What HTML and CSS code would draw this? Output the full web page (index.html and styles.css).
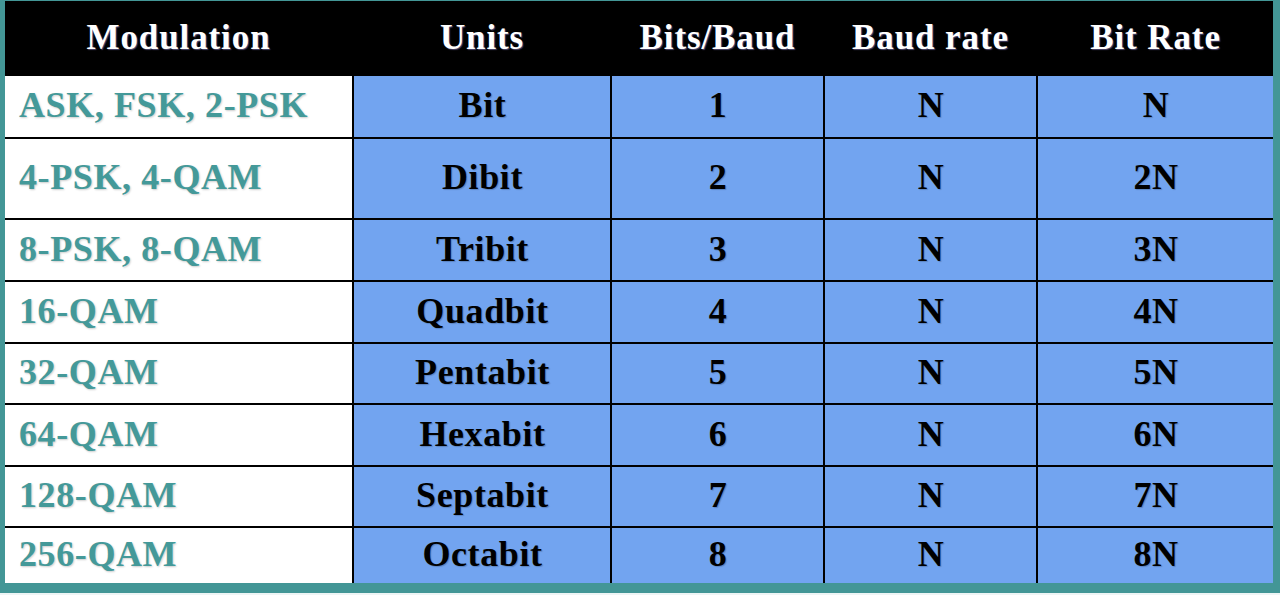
FILE: index.html
```html
<!DOCTYPE html>
<html>
<head>
<meta charset="utf-8">
<link rel="stylesheet" href="styles.css">
</head>
<body>
<div class="frame">
  <div class="grid">
    <div class="cell head">Modulation</div>
    <div class="cell head">Units</div>
    <div class="cell head">Bits/Baud</div>
    <div class="cell head">Baud rate</div>
    <div class="cell head">Bit Rate</div>

    <div class="cell mod">ASK, FSK, 2-PSK</div>
    <div class="cell val">Bit</div>
    <div class="cell val">1</div>
    <div class="cell val">N</div>
    <div class="cell val">N</div>

    <div class="cell mod">4-PSK, 4-QAM</div>
    <div class="cell val">Dibit</div>
    <div class="cell val">2</div>
    <div class="cell val">N</div>
    <div class="cell val">2N</div>

    <div class="cell mod">8-PSK, 8-QAM</div>
    <div class="cell val">Tribit</div>
    <div class="cell val">3</div>
    <div class="cell val">N</div>
    <div class="cell val">3N</div>

    <div class="cell mod">16-QAM</div>
    <div class="cell val">Quadbit</div>
    <div class="cell val">4</div>
    <div class="cell val">N</div>
    <div class="cell val">4N</div>

    <div class="cell mod">32-QAM</div>
    <div class="cell val">Pentabit</div>
    <div class="cell val">5</div>
    <div class="cell val">N</div>
    <div class="cell val">5N</div>

    <div class="cell mod">64-QAM</div>
    <div class="cell val">Hexabit</div>
    <div class="cell val">6</div>
    <div class="cell val">N</div>
    <div class="cell val">6N</div>

    <div class="cell mod">128-QAM</div>
    <div class="cell val">Septabit</div>
    <div class="cell val">7</div>
    <div class="cell val">N</div>
    <div class="cell val">7N</div>

    <div class="cell mod">256-QAM</div>
    <div class="cell val">Octabit</div>
    <div class="cell val">8</div>
    <div class="cell val">N</div>
    <div class="cell val">8N</div>
  </div>
</div>
</body>
</html>
```

FILE: styles.css
```css
html, body {
  margin: 0;
  padding: 0;
  background: #eef5f5;
}
.frame {
  width: 1280px;
  height: 593px;
  box-sizing: border-box;
  background: #439696;
  padding: 1px 7px 10px 5px;
}
.grid {
  display: grid;
  grid-template-columns: 347px 256px 211px 211px 235px;
  grid-template-rows: 73px 61px 79px 60px 60px 59px 60px 59px 55px;
  gap: 2px;
  background: #000;
  font-family: "Liberation Serif", "Times New Roman", serif;
  font-weight: bold;
}
.cell {
  display: flex;
  align-items: center;
  justify-content: center;
  box-sizing: border-box;
  white-space: nowrap;
}
.head {
  background: #000;
  color: #fff;
  font-size: 35px;
  letter-spacing: 0.9px;
  text-shadow: 1px 1px 1px rgba(140, 130, 200, 0.55);
}
.mod {
  background: #fff;
  color: #449999;
  font-size: 36px;
  letter-spacing: 0.6px;
  justify-content: flex-start;
  padding: 0 0 3px 14px;
  text-shadow: 1px 1px 2px rgba(0, 0, 0, 0.2);
}
.val {
  background: #72a4f0;
  color: #000;
  font-size: 36px;
  letter-spacing: 0.6px;
  padding: 0 0 3px 1px;
  text-shadow: 1px 1px 1px rgba(0, 0, 0, 0.2);
}
```
